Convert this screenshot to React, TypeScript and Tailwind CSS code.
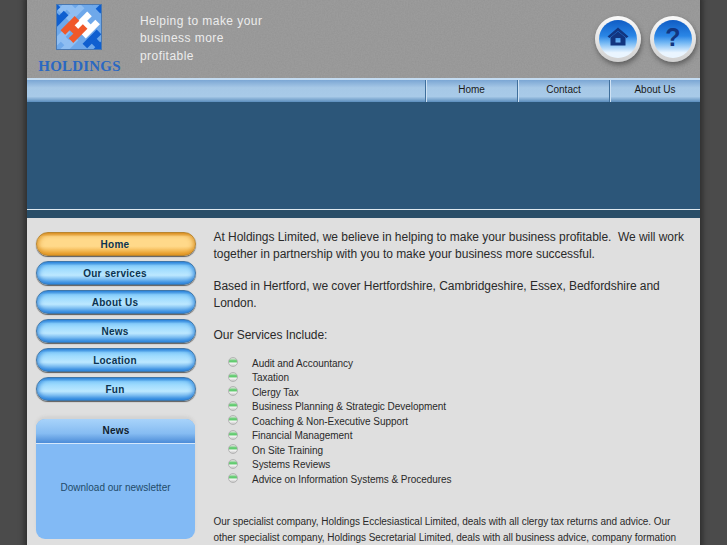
import React from "react";

const navLinks = ["Home", "Contact", "About Us"];
const sideLinks = ["Home", "Our services", "About Us", "News", "Location", "Fun"];
const services = [
   "Audit and Accountancy",
   "Taxation",
   "Clergy Tax",
   "Business Planning & Strategic Development",
   "Coaching & Non-Executive Support",
   "Financial Management",
   "On Site Training",
   "Systems Reviews",
   "Advice on Information Systems & Procedures",
];

function HShape({ x, y, fill }: { x: number; y: number; fill: string }) {
   return (
      <g transform={`translate(${x} ${y}) rotate(-45)`} fill={fill}>
         <rect x="-10" y="-9" width="20" height="6.5" />
         <rect x="-10" y="2.5" width="20" height="6.5" />
         <rect x="-3.5" y="-3" width="7" height="6" />
      </g>
   );
}

function Logo() {
   return (
      <svg width="46" height="46" viewBox="0 0 46 46" className="block">
         <clipPath id="logoClip">
            <rect width="46" height="46" />
         </clipPath>
         <g clipPath="url(#logoClip)">
            <rect width="46" height="46" fill="#6ea8ea" />
            <HShape x={15} y={5} fill="#8fbef2" />
            <HShape x={9} y={37} fill="#8fbef2" />
            <HShape x={-1} y={12} fill="#0f5fd0" />
            <HShape x={45} y={-4} fill="#0f5fd0" />
            <HShape x={40} y={39} fill="#0f5fd0" />
            <HShape x={30.5} y={21} fill="#ffffff" />
            <HShape x={18} y={25.5} fill="#f0582a" />
         </g>
         <rect x="0.5" y="0.5" width="45" height="45" fill="none" stroke="#4a78b0" />
      </svg>
   );
}

function RoundButton({ children }: { children: React.ReactNode }) {
   return (
      <div className="w-[46px] h-[46px] rounded-full bg-gradient-to-b from-[#fafafa] to-[#d0d0d0] p-[4px] shadow-[1px_3px_5px_rgba(40,40,40,0.5)]">
         <div className="w-full h-full rounded-full bg-[linear-gradient(to_bottom,#0f5cc4_0%,#2a86e6_42%,#74b8f4_60%,#eaf5ff_86%)] flex items-center justify-center">
            {children}
         </div>
      </div>
   );
}

function SideButton({ label, active }: { label: string; active: boolean }) {
   return (
      <a
         className={
            "h-[24px] rounded-[12px] flex items-center justify-center text-[10px] font-bold tracking-[0.25px] text-[#0b3350] pr-[2px] " +
            (active
               ? "bg-[linear-gradient(to_bottom,#e0982e_0%,#ffd98a_16%,#ffd98a_60%,#eea42e_100%)] shadow-[inset_0_0_5px_1px_rgba(215,140,30,0.9),0_1px_1px_rgba(60,60,60,0.8)] border border-[#b9852f]"
               : "bg-[linear-gradient(to_bottom,#3f93e0_0%,#8fd4fd_16%,#bce8ff_60%,#3f95e4_100%)] shadow-[inset_0_0_5px_1px_rgba(30,120,215,0.85),0_1px_1px_rgba(60,60,60,0.8)] border border-[#3f76a8]")
         }
      >
         {label}
      </a>
   );
}

export default function App() {
   return (
      <div className="w-[727px] h-[545px] overflow-hidden bg-[#4b4b4b] font-['Liberation_Sans',Arial,sans-serif]">
         <div className="w-[673px] h-[545px] ml-[27px] shadow-[0_0_5px_3px_rgba(30,30,30,0.6)] bg-[#dfdfdf] flex flex-col">
            <header className="relative h-[78px] bg-[#9c9c9c] flex shrink-0 overflow-hidden">
               <svg className="absolute inset-0 opacity-40" width="673" height="78">
                  <filter id="grain">
                     <feTurbulence type="fractalNoise" baseFrequency="0.7" numOctaves="2" seed="4" />
                     <feColorMatrix values="0 0 0 0 0.25  0 0 0 0 0.25  0 0 0 0 0.25  0 0 0 1.4 -0.3" />
                  </filter>
                  <rect width="673" height="78" filter="url(#grain)" />
               </svg>
               <div className="relative w-[104px] flex flex-col items-center pt-[4px] shrink-0">
                  <Logo />
                  <div className="mt-[9px] ml-[1px] font-['Liberation_Serif',serif] font-bold text-[15px] leading-[15px] tracking-[0.2px] text-[#2a68c2]">
                     HOLDINGS
                  </div>
               </div>
               <p className="relative ml-[9px] mt-[13px] text-[12px] leading-[17.3px] tracking-[0.45px] text-[#ececec] w-[140px]">
                  Helping to make your business more profitable
               </p>
               <div className="relative ml-auto mr-[4px] mt-[16px] flex gap-[9px] h-[46px]">
                  <RoundButton>
                     <svg width="22" height="20" viewBox="0 0 22 20" className="mb-[4px]">
                        <path d="M11 0.5 L21.5 9.5 L19.5 11 L11 4 L2.5 11 L0.5 9.5Z" fill="#12357f" />
                        <path
                           fillRule="evenodd"
                           d="M3.5 10.5 L11 4.5 L18.5 10.5 V18.5 H3.5Z M8.5 11 V15.5 H13.5 V11Z"
                           fill="#12357f"
                        />
                     </svg>
                  </RoundButton>
                  <RoundButton>
                     <span className="text-[#12357f] font-bold text-[25px] leading-none mb-[3px]">?</span>
                  </RoundButton>
               </div>
            </header>

            <nav className="h-[24px] shrink-0 flex justify-end border-t-2 border-[#c4dcf2] bg-[linear-gradient(to_bottom,#7ba6d4_0%,#a6c8e6_35%,#a8cae8_75%,#5b8dbd_100%)]">
               {navLinks.map((link) => (
                  <a
                     key={link}
                     className="w-[92px] last:w-[91px] border-l border-[#3f6f9c] shadow-[inset_1px_0_0_#cfe2f4] flex items-center justify-center text-[10px] text-[#1a1a1a] pb-[4px]"
                  >
                     {link}
                  </a>
               ))}
            </nav>

            <div className="h-[116px] shrink-0 flex flex-col justify-end bg-[#2c5679]">
               <div className="h-[9px] border-t border-[#dfe8ef] bg-[#2a4e68]" />
            </div>

            <main className="flex flex-1 pt-[14px] pl-[9px] min-h-0">
               <aside className="w-[160px] shrink-0 flex flex-col">
                  <div className="flex flex-col gap-[5px]">
                     {sideLinks.map((link) => (
                        <SideButton key={link} label={link} active={link === "Home"} />
                     ))}
                  </div>
                  <div className="mt-[18px] w-[159px] rounded-[9px] overflow-hidden h-[120px] bg-[#82baf5] flex flex-col shadow-[0_-3px_3px_rgba(120,120,120,0.12)]">
                     <div className="h-[25px] shrink-0 border-b border-[#d5e8fb] bg-[linear-gradient(to_bottom,#a8d3fa_0%,#86bcf2_60%,#4c8cd8_100%)] flex items-center justify-center text-[10px] tracking-[0.2px] font-bold text-[#10202e] pb-[2px] pl-[1px]">
                        News
                     </div>
                     <div className="flex-1 flex items-center justify-center text-[10px] text-[#1f4a68] pb-[9px]">
                        Download our newsletter
                     </div>
                  </div>
               </aside>

               <section className="ml-[17.5px] mt-[-3px] w-[476px] text-[#2a2a2a] text-[12px] leading-[16.5px] tracking-[-0.04px]">
                  <p>
                     At Holdings Limited, we believe in helping to make your business profitable.&nbsp; We will work together in partnership with you to make your business more successful.
                  </p>
                  <p className="mt-[16px]">
                     Based in Hertford, we cover Hertfordshire, Cambridgeshire, Essex, Bedfordshire and London.
                  </p>
                  <p className="mt-[16px]">Our Services Include:</p>
                  <ul className="mt-[13px] ml-[14.5px] text-[10px]">
                     {services.map((service) => (
                        <li key={service} className="flex items-center h-[14.5px]">
                           <span className="w-[10px] h-[10px] rounded-full border border-[#b4b4b4] bg-[linear-gradient(to_bottom,#cfe0cf_10%,#62cc70_34%,#62cc70_50%,#f8f8f8_62%,#c8c8c8_100%)] mr-[14px] mb-[3px] shrink-0" />
                           {service}
                        </li>
                     ))}
                  </ul>
                  <p className="mt-[27px] text-[10px] leading-[15.5px] w-[470px]">
                     Our specialist company, Holdings Ecclesiastical Limited, deals with all clergy tax returns and advice. Our other specialist company, Holdings Secretarial Limited, deals with all business advice, company formation
                  </p>
               </section>
            </main>
         </div>
      </div>
   );
}
